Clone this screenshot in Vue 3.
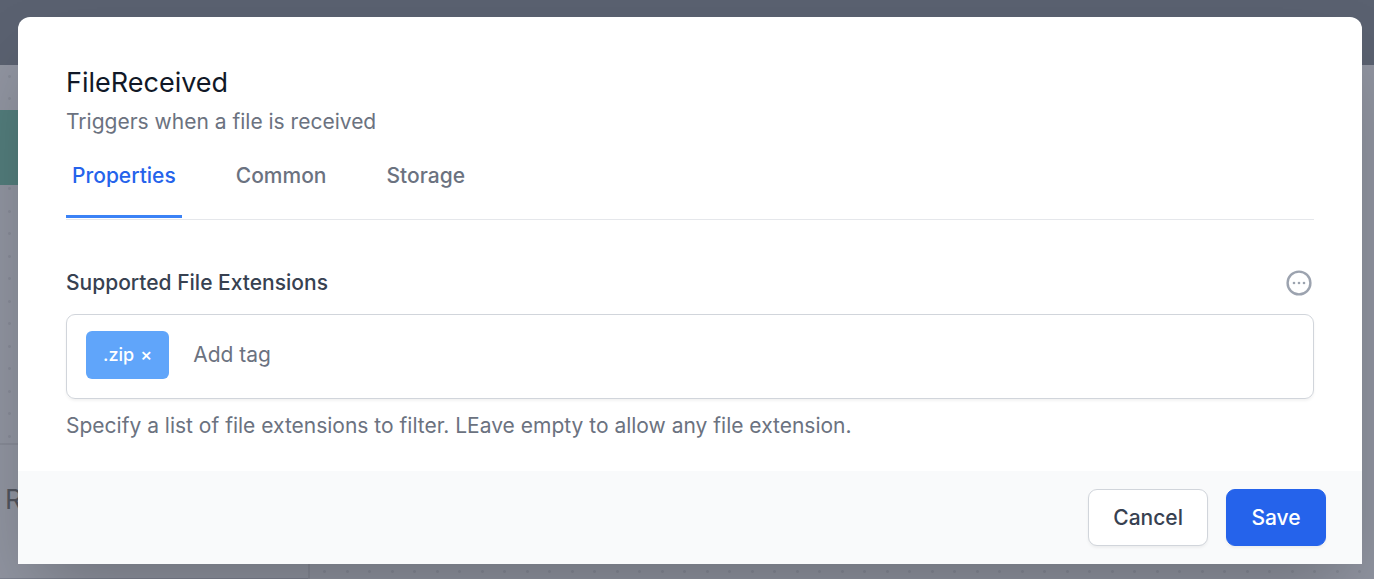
<script setup>
import { ref } from 'vue'

const tabs = ['Properties', 'Common', 'Storage']
const activeTab = ref('Properties')
const tags = ref(['.zip'])
const draft = ref('')

function addTag() {
  const value = draft.value.trim()
  if (value && !tags.value.includes(value)) tags.value.push(value)
  draft.value = ''
}

function removeTag(tag) {
  tags.value = tags.value.filter((t) => t !== tag)
}
</script>

<template>
  <div class="page">
    <div class="backdrop" aria-hidden="true">
      <div class="topbar"></div>
      <div class="canvas">
        <div class="node"></div>
        <div class="side-panel">
          <div class="side-card">R</div>
        </div>
      </div>
    </div>

    <section class="dialog" role="dialog" aria-modal="true" aria-labelledby="dialog-title">
      <div class="content">
        <h1 id="dialog-title">FileReceived</h1>
        <p class="subtitle">Triggers when a file is received</p>

        <nav class="tabs" role="tablist">
          <button
            v-for="tab in tabs"
            :key="tab"
            type="button"
            role="tab"
            class="tab"
            :class="{ active: tab === activeTab }"
            :aria-selected="tab === activeTab"
            @click="activeTab = tab"
          >{{ tab }}</button>
        </nav>

        <div class="field-head">
          <label for="extensions">Supported File Extensions</label>
          <button type="button" class="more" aria-label="Field options">
            <svg width="26" height="26" viewBox="0 0 26 26" fill="none">
              <circle cx="13" cy="13" r="11.4" stroke="#9ca3af" stroke-width="2.4" />
              <circle cx="8" cy="13" r="1.3" fill="#9ca3af" />
              <circle cx="13" cy="13" r="1.3" fill="#9ca3af" />
              <circle cx="18" cy="13" r="1.3" fill="#9ca3af" />
            </svg>
          </button>
        </div>

        <div class="tag-box">
          <button
            v-for="tag in tags"
            :key="tag"
            type="button"
            class="tag"
            @click="removeTag(tag)"
          ><span>{{ tag }}</span><span>×</span></button>
          <input
            id="extensions"
            v-model="draft"
            class="tag-input"
            type="text"
            placeholder="Add tag"
            @keydown.enter.prevent="addTag"
          />
        </div>
        <p class="hint">Specify a list of file extensions to filter. LEave empty to allow any file extension.</p>
      </div>

      <footer class="actions">
        <button type="button" class="btn cancel">Cancel</button>
        <button type="button" class="btn save">Save</button>
      </footer>
    </section>
  </div>
</template>

<style>
body {
  background: #8f939e;
}
</style>

<style scoped>
.page {
  position: relative;
  box-sizing: border-box;
  min-height: 100vh;
  padding: 17px 12px 15px 18px;
  overflow: hidden;
  font-family: Inter, "Liberation Sans", sans-serif;
  font-size: 21px;
  line-height: 30px;
}

.page * {
  box-sizing: border-box;
}

.backdrop {
  position: absolute;
  inset: 0;
  display: flex;
  flex-direction: column;
}

.topbar {
  height: 65px;
  background: #5a6170;
}

/* Dotted grid: two dots per 45px tile in each direction */
.canvas {
  flex: 1;
  display: flex;
  flex-direction: column;
  background-color: #9094a0;
  background-image:
    radial-gradient(circle, #868a96 1px, transparent 2px),
    radial-gradient(circle, #868a96 1px, transparent 2px),
    radial-gradient(circle, #868a96 1px, transparent 2px),
    radial-gradient(circle, #868a96 1px, transparent 2px);
  background-size: 45px 45px;
  background-position: -13px -11px, 10px -11px, -13px 11px, 10px 11px;
}

.node {
  width: 120px;
  height: 75px;
  margin-top: 45px;
  background: #527c7b;
}

.side-panel {
  width: 310px;
  margin-top: auto;
  border-top: 2px solid #868a96;
  border-right: 2px solid #868a96;
}

.side-card {
  height: 134px;
  padding: 37px 5px;
  border-bottom: 1px solid #7d8290;
  background: #9094a0;
  color: #50545e;
  font-size: 27px;
  line-height: 36px;
}

.dialog {
  position: relative;
  border-radius: 12px 12px 0 0;
  background: #fff;
  box-shadow: 0 36px 72px -18px rgba(0, 0, 0, 0.25);
}

.content {
  padding: 48px 48px 30px;
}

h1 {
  margin: 0;
  color: #111827;
  font-size: 27px;
  font-weight: 400;
  line-height: 36px;
}

p {
  margin: 6px 0 0;
  color: #6b7280;
}

button,
input {
  margin: 0;
  padding: 0;
  border: 0;
  background: none;
  font: inherit;
}

button {
  cursor: pointer;
}

.tabs {
  display: flex;
  gap: 48px;
  margin-top: 24px;
  padding-bottom: 1px;
  border-bottom: 1px solid #e5e7eb;
}

.tab {
  padding: 0 6px 24px;
  border-bottom: 3px solid transparent;
  color: #6b7280;
  font-weight: 500;
}

.tab.active {
  border-color: #3b82f6;
  color: #2563eb;
}

.field-head {
  display: flex;
  align-items: center;
  justify-content: space-between;
  margin-top: 48px;
  padding-right: 2px;
  color: #374151;
  font-weight: 500;
}

.more {
  display: flex;
}

.tag-box {
  display: flex;
  gap: 6px;
  margin-top: 16px;
  padding: 16px 19px 19px;
  border: 1px solid #d1d5db;
  border-radius: 9px;
  box-shadow: 0 2px 3px rgba(0, 0, 0, 0.05);
}

.tag {
  display: flex;
  align-items: center;
  gap: 6px;
  height: 48px;
  padding: 0 17px;
  border-radius: 6px;
  background: #60a5fa;
  color: #fff;
  font-size: 18px;
  font-weight: 500;
}

.tag-input {
  flex: 1;
  min-width: 0;
  height: 46px;
  padding: 0 18px;
  outline: none;
  color: #374151;
}

.tag-input::placeholder {
  color: #6b7280;
  opacity: 1;
}

.hint {
  margin-top: 12px;
}

.actions {
  display: flex;
  justify-content: flex-end;
  gap: 18px;
  padding: 18px 36px;
  background: #f9fafb;
}

.btn {
  min-width: 100px;
  height: 57px;
  padding: 0 24px;
  border: 1px solid #d1d5db;
  border-radius: 9px;
  background: #fff;
  box-shadow: 0 2px 3px rgba(0, 0, 0, 0.05);
  color: #374151;
  font-weight: 500;
}

.btn.save {
  border-color: #2563eb;
  background: #2563eb;
  color: #fff;
}
</style>
